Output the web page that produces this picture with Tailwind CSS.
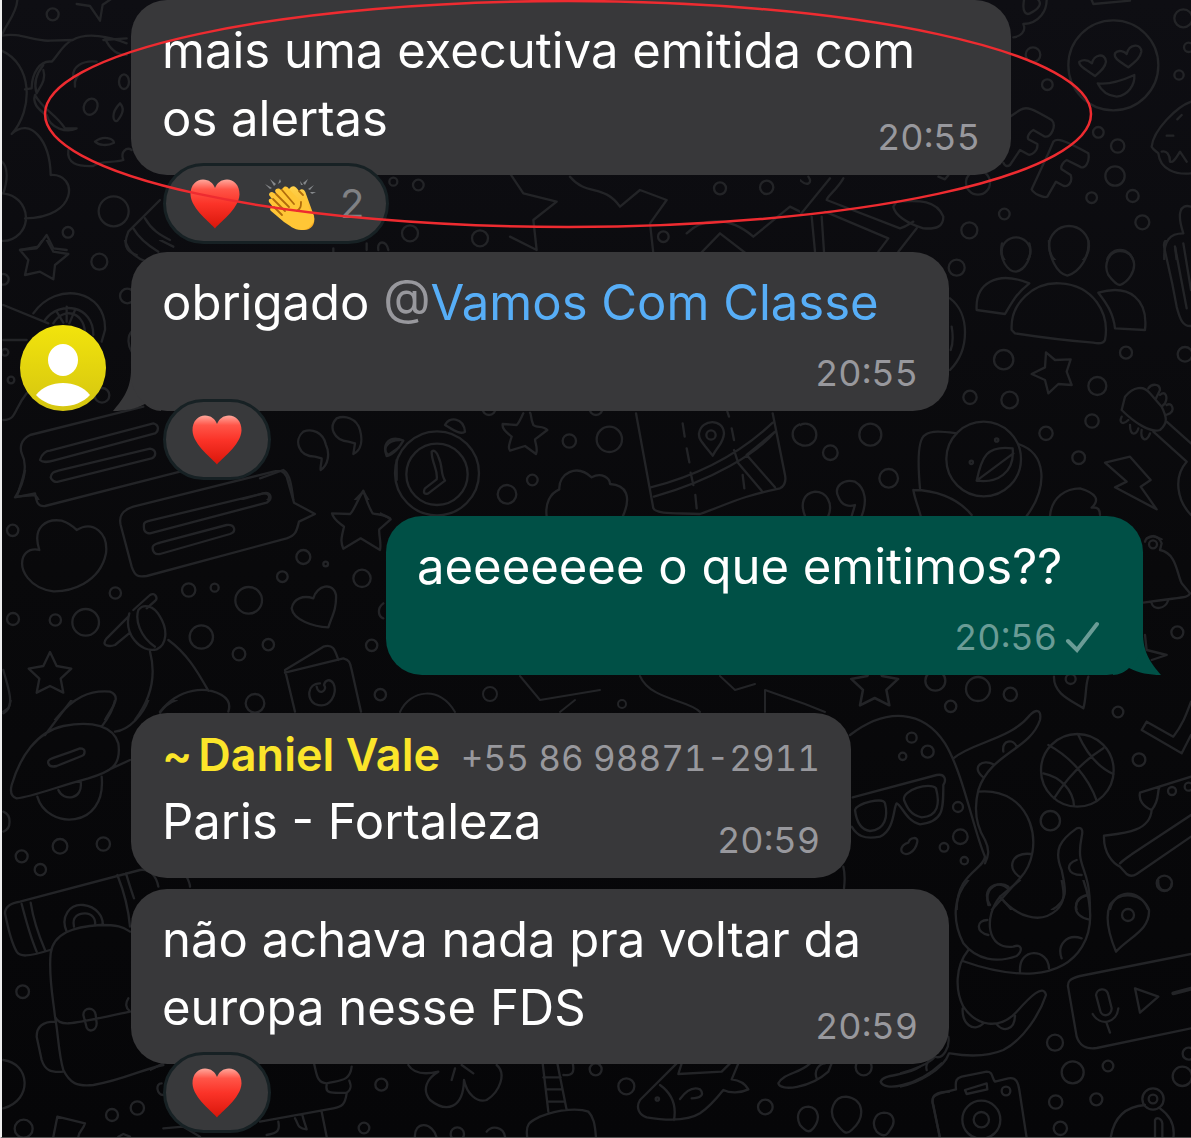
<!DOCTYPE html>
<html lang="pt-BR">
  <head>
    <meta charset="UTF-8" />
    <meta name="viewport" content="width=device-width, initial-scale=1.0" />
    <title>Vamos Com Classe</title>
    <script src="https://cdn.jsdelivr.net/npm/@tailwindcss/browser@4"></script>
  </head>
  <body class="bg-[#08080a] font-['Inter',sans-serif] text-white">
    <div class="relative isolate min-h-screen overflow-hidden border-b border-l-2 border-b-[#555] border-l-[#eee] bg-linear-to-b from-[#0e0e13] via-[#09090b] to-[#060608]">
      <!-- Wallpaper doodles -->
      <svg class="absolute -left-0.5 top-0 -z-10 h-full w-[calc(100%+2px)]" viewBox="0 0 1191 1138" preserveAspectRatio="xMinYMin slice" fill="none" stroke="#232427" stroke-linejoin="round" stroke-linecap="round" aria-hidden="true">
        <defs>
          <path id="star" d="M0-62 20-20 64-12 32 18 40 60 0 40-40 60-32 18-64-12-20-20Z" />
        </defs>

        <svg width="400" height="260" viewBox="0 0 1200 780" stroke-width="7">
          <circle cx="158" cy="43" r="18" /><circle cx="341" cy="634" r="45" /><circle cx="204" cy="697" r="16" /><circle cx="1180" cy="545" r="12" />
          <path d="M230 12 270 18 300 62 308 14 335-4M0 108C60 95 100 125 150 122L218 120C190 130 175 165 155 185 120 180 95 220 95 265L75 268M52 0C50 40 20 70 8 100M0 150C100 190 100 330 35 402 90 350 150 420 152 525 235 520 235 655 75 655M0 580C70 580 100 655 60 700 40 720 20 725 0 722M0 480C30 500 20 550 10 580" />
          <path d="M218 120C260 95 330 110 380 130M315 115C330 150 350 165 380 165M310 120 380 115M130 210C140 240 120 260 110 280 100 250 110 220 130 195M105 285C130 330 165 340 195 385H230C200 400 150 385 140 345 100 320 100 300 105 285M205 450C200 490 230 500 280 498 300 480 340 490 370 480 360 455 380 440 395 450M220 230C215 200 250 180 290 185M225 260C222 240 230 225 250 215M285 425C310 405 340 415 342 428 320 440 295 435 285 425ZM360 310C330 340 340 370 352 362 375 335 370 320 360 310Z" />
          <ellipse cx="272" cy="320" rx="20" ry="25" transform="rotate(25 272 320)" /><ellipse cx="372" cy="245" rx="15" ry="22" />
          <path d="M480 600 385 695C370 730 375 755 410 765M400 685C420 720 450 740 475 755M435 655C455 690 480 705 510 720M60 750 115 740 140 705 160 745 200 750" />
        </svg>

        <svg x="400" y="170" width="400" height="84" viewBox="0 0 1200 252" stroke-width="7">
          <circle cx="55" cy="45" r="16" /><circle cx="240" cy="205" r="24" /><circle cx="960" cy="55" r="18" /><circle cx="1100" cy="52" r="20" /><circle cx="790" cy="200" r="16" /><circle cx="30" cy="190" r="24" />
          <path d="M330 10 370 70 470 95 400 150 410 240 330 200M510 20C560 80 610 40 660 110L720 60 800 90 750 160 760 250M860 190C900 150 980 130 1060 200L1170 110 1200 125M900 252 960 190 1040 252" />
        </svg>

        <svg x="800" y="0" width="391" height="260" viewBox="0 0 1173 780" stroke-width="7">
          <circle cx="940" cy="196" r="135" /><circle cx="699" cy="164" r="22" /><circle cx="742" cy="254" r="16" /><circle cx="895" cy="397" r="16" /><circle cx="953" cy="438" r="20" /><circle cx="945" cy="528" r="29" /><circle cx="875" cy="593" r="16" /><circle cx="998" cy="588" r="18" /><circle cx="1027" cy="667" r="21" /><circle cx="613" cy="642" r="16" /><circle cx="508" cy="691" r="24" /><circle cx="1150" cy="55" r="27" /><circle cx="1137" cy="225" r="14" /><circle cx="1166" cy="142" r="14" /><circle cx="534" cy="548" r="36" /><path d="M415 530 435 538 445 526M0 540C20 560 40 550 25 530" />
          <path d="M885 228C850 205 835 195 838 185 855 175 870 185 876 190 880 165 915 155 918 185 915 205 900 215 885 228ZM985 202C960 185 940 175 945 160 955 147 975 155 980 162 988 130 1025 130 1024 155 1020 175 1005 185 985 202ZM893 250C930 255 970 240 1003 225 1005 255 985 285 950 290 925 288 905 275 893 250Z" />
          <path d="M630 350 660 330C680 318 695 325 755 360 770 375 755 412 735 410L700 390C690 395 680 408 685 418L712 432C715 450 695 470 682 462L660 450 630 495C620 502 612 495 610 488M745 460 760 425C770 415 785 415 865 460 870 485 855 510 840 500L800 480C790 485 780 500 785 508L812 525C820 550 800 562 790 557L768 545 742 590C730 595 700 580 695 568L745 460" />
          <path d="M1173 305C1130 320 1060 390 1055 440 1060 450 1070 455 1075 460 1080 510 1130 525 1173 520M1085 455C1100 450 1110 465 1110 485 1120 490 1130 470 1140 455L1160 485M1100 407H1120M1132 358 1145 345M672 0C665 40 680 45 690 40 720 25 725 10 715 0M740 0C740 30 720 70 670 72 680 95 660 110 640 112M875 0 880 12 990 2" />
          <circle cx="807" cy="738" r="60" /><circle cx="648" cy="755" r="43" /><circle cx="960" cy="790" r="40" />
          <path d="M130 535C110 570 80 590 80 600L300 685C320 680 330 670 340 665M290 605C360 600 410 600 430 650 430 680 410 688 370 685 320 670 285 645 280 620ZM90 535 0 645M35 650 45 755M65 650 72 755M75 635 265 715 235 755M350 685 295 755M1173 620C1140 610 1130 640 1150 700 1110 700 1090 720 1093 780M1125 740 1130 780" />
        </svg>

        <svg x="0" y="240" width="400" height="260" viewBox="0 0 1200 780" stroke-width="7">
          <path d="M135-10 160 35 205 42 165 75 160 118 120 95 75 105 85 60 60 30 110 25ZM375 0C385 40 420 60 440 65M480 0 520 20" />
          <circle cx="298" cy="65" r="24" /><circle cx="10" cy="118" r="16" /><circle cx="382" cy="168" r="22" /><circle cx="306" cy="466" r="22" /><circle cx="33" cy="420" r="10" /><circle cx="15" cy="337" r="10" /><path d="M395 275C380 290 385 320 395 335M10 195 145 250M100 220C170 120 320 150 315 270L305 305M135 240C180 180 280 195 280 285M160 250C190 200 250 215 255 275M200 200V245M225 210 208 250M170 215 190 248M10 300H80M10 540C50 540 40 510 80 460M1000 25V35M1100 10V30M1135 30C1130 0 1160 0 1165 30" />
          <path d="M430 500 90 585C60 600 60 625 65 640 85 680 70 710 50 770L105 765C115 775 115 780 120 790M780 715 850 690C870 700 875 740 880 780M120 660C125 640 140 632 150 632L460 550C480 555 475 575 465 580L160 662C140 668 125 665 120 660ZM152 712C155 695 165 695 175 692L450 626C472 630 468 650 455 655L175 725C165 728 155 722 152 712ZM500 840 790 760C810 758 812 775 800 782" />
          <path d="M978 615C970 575 935 565 910 575 880 600 895 650 945 650L965 655C965 670 960 680 962 690 985 675 990 640 978 615ZM1080 570C1070 535 1035 525 1010 535 985 560 1000 600 1045 605L1065 610 1060 642C1085 630 1088 600 1080 570ZM1200 600C1160 600 1145 630 1165 645L1200 620M1190 660V720M1065 780 1090 755 1105 780" />
        </svg>

        <svg x="380" y="400" width="420" height="120" viewBox="0 0 1260 360" stroke-width="7">
          <circle cx="171" cy="220" r="126" /><circle cx="171" cy="223" r="92" /><circle cx="568" cy="123" r="20" /><circle cx="688" cy="118" r="38" /><circle cx="457" cy="240" r="16" /><circle cx="381" cy="283" r="28" /><circle cx="327" cy="25" r="20" /><circle cx="648" cy="25" r="20" /><circle cx="1270" cy="103" r="32" />
          <path d="M155 155C160 148 170 155 175 170 190 200 180 220 195 242L145 280C130 285 130 275 135 265L170 238C175 210 155 190 155 155ZM195 75C205 50 250 50 255 95 240 105 220 90 195 75ZM20 168C5 130 30 105 70 122 60 140 40 165 20 168ZM0 340 30 355" />
          <path d="M430 40C420 60 415 72 410 75L368 72C365 90 385 100 395 110 385 140 385 145 390 152L435 138 468 162C475 145 465 130 465 118L502 90C490 75 470 85 460 75 450 50 455 45 450 38M500 350C495 310 510 280 538 268 535 220 590 190 635 232 665 215 690 235 690 252 740 255 755 290 728 350" />
          <path d="M768 40 820 325C830 345 900 338 960 342 1050 310 1080 290 1200 265 1218 255 1218 240 1215 225L1178 40M812 262C960 225 1080 160 1178 68M822 290C1000 240 1130 160 1185 95M1062 150 1075 190 1145 272M1100 165 1185 262M1100 165 1185 95M932 218 940 255M908 70 914 110M920 145 928 187M946 285 950 325M1042 35 1047 50M1055 85 1062 120M1088 225 1093 265M998 167C970 130 955 120 957 100 965 55 1030 55 1032 100 1030 130 1015 135 998 167Z" />
          <circle cx="993" cy="105" r="14" />
        </svg>

        <svg x="800" y="240" width="391" height="300" viewBox="0 0 1173 900" stroke-width="7">
          <circle cx="470" cy="83" r="24" /><circle cx="611" cy="359" r="29" /><circle cx="978" cy="338" r="18" /><circle cx="892" cy="438" r="27" /><circle cx="876" cy="543" r="20" /><circle cx="510" cy="472" r="20" /><circle cx="629" cy="480" r="25" /><circle cx="738" cy="580" r="20" /><circle cx="836" cy="653" r="19" /><circle cx="16" cy="584" r="33" /><circle cx="91" cy="638" r="22" /><circle cx="211" cy="584" r="33" /><circle cx="266" cy="715" r="28" /><circle cx="1155" cy="343" r="22" /><circle cx="551" cy="657" r="112" /><circle cx="590" cy="600" r="5" /><circle cx="514" cy="667" r="5" />
          <path d="M606 10C595 60 625 95 648 95 675 90 700 50 688 10M747 0C745 50 770 100 802 107 840 95 870 50 865 0M960 33C925 33 910 75 925 105 940 125 950 135 960 135 985 125 1005 95 1002 70 1000 50 985 33 960 33ZM530 210C525 130 590 90 688 130 650 160 640 180 615 222ZM635 270C630 190 700 125 780 130 880 135 930 220 915 300 910 312 890 310 880 308 780 300 710 290 645 280ZM895 158C990 130 1045 180 1035 270L945 265C940 220 920 190 895 158Z" />
          <path d="M738 337 765 360 812 358 800 395 815 435 775 432 745 460 735 420 695 402 735 382ZM450 175C510 220 510 330 450 390M455 260C460 290 460 310 452 330M360 745C355 690 350 600 375 585 395 570 430 575 470 580M655 612C740 640 745 740 680 828M340 750C400 750 470 770 515 825M340 750C345 780 355 800 362 828M530 722C545 650 560 615 638 625 645 700 590 730 530 722ZM530 722 640 640" />
          <path d="M750 828C755 770 800 745 840 745 890 760 900 780 875 803 895 800 900 810 900 825M915 668 990 650 1052 720 1022 740 1070 808 945 742 980 725Z" />
          <path d="M975 470C1000 440 1030 435 1050 460L1085 500C1100 530 1105 550 1080 570 1050 580 1000 545 965 510ZM1045 445C1055 430 1080 430 1080 450L1068 475M1080 465C1095 450 1105 470 1095 490L1085 500M1100 495C1115 485 1125 510 1110 520L1098 525M965 530C955 550 970 555 985 540M990 555C990 590 1010 585 1015 565M1025 570C1020 600 1040 610 1050 580M1060 575 1160 665M1100 545 1173 610M1160 665C1120 710 1130 780 1173 825M1100 0C1080 10 1100 30 1130 200 1140 240 1150 260 1173 258M1125 20 1160 205M1150 10 1173 150" />
          <path d="M85 828C100 790 80 755 45 755 10 760 0 790 15 828M115 770C100 740 130 715 165 725 200 745 200 790 185 828M115 770C125 800 150 800 165 795L155 828M1040 895 1060 888 1085 898" />
        </svg>

        <svg x="0" y="470" width="400" height="250" viewBox="0 0 1200 750" stroke-width="7">
          <circle cx="38" cy="181" r="17" /><circle cx="39" cy="447" r="18" /><circle cx="166" cy="450" r="17" /><circle cx="257" cy="457" r="40" /><circle cx="346" cy="369" r="17" /><circle cx="566" cy="360" r="20" /><circle cx="644" cy="353" r="12" /><circle cx="746" cy="391" r="40" /><circle cx="847" cy="320" r="16" /><circle cx="910" cy="261" r="21" /><circle cx="977" cy="282" r="7" /><circle cx="1086" cy="325" r="26" /><circle cx="604" cy="501" r="35" /><circle cx="717" cy="552" r="19" /><circle cx="805" cy="524" r="17" /><circle cx="1115" cy="526" r="17" /><circle cx="1141" cy="674" r="17" /><circle cx="765" cy="700" r="28" />
          <path d="M1090 62C1070 95 1060 125 1050 132L996 130C1000 150 1020 160 1032 170 1025 200 1020 215 1030 236L1082 205 1140 240C1145 220 1135 190 1138 178L1172 148C1155 130 1130 135 1118 130 1105 110 1100 90 1090 62Z" />
          <use href="#star" x="150" y="608" />
          <path d="M75 0C70 40 60 60 45 82L105 70C110 100 115 110 135 108L540 5M118 240C95 170 140 145 185 152 210 160 220 170 230 180 280 150 325 190 318 250 300 340 210 365 160 364 90 355 55 300 70 260 80 240 100 235 118 240ZM400 110C370 120 355 135 362 165L395 290C405 320 415 322 440 318L860 205C890 195 890 180 897 155L945 132 882 98 860 20C850 0 840 0 820 5L400 110M432 165C430 155 440 155 450 152L790 70C812 65 820 85 800 98L450 190C435 190 430 180 432 165ZM458 232C460 222 470 222 480 218L680 165C705 162 710 185 690 192L480 252C465 255 457 245 458 232Z" />
          <path d="M400 420 450 375C465 365 475 385 465 393L440 415M385 440 320 505C300 530 330 530 345 525L390 488M388 430C370 490 420 550 470 538 500 525 505 480 480 440 460 405 430 400 415 420 405 450 420 500 465 530M450 545C470 620 450 690 405 750M505 510C560 550 590 600 625 662M480 725C540 650 620 650 665 675 690 690 690 710 685 725M165 750C220 680 270 660 330 665 370 680 330 720 315 750M940 385C950 345 1000 335 1008 375 1010 420 995 440 985 472 940 470 880 450 875 415 880 385 910 375 940 385ZM885 725 855 600 970 530C1000 520 1005 540 1015 570M855 608 1030 565C1050 570 1050 580 1055 600L1083 725M960 640C920 640 920 690 945 702 990 720 1015 670 1000 640 990 625 975 630 972 645 985 660 955 680 950 650M1150 400C1130 415 1135 440 1150 445M10 600C20 640 40 690 25 715L10 725" />
        </svg>

        <svg x="900" y="500" width="291" height="180" viewBox="0 0 873 540" stroke-width="7">
          <circle cx="832" cy="397" r="18" /><circle cx="759" cy="133" r="12" /><path d="M735 125C740 105 775 100 785 130L780 150C830 160 830 220 845 250L870 280C865 295 850 290 730 308M755 310C760 330 795 330 805 300M735 405 740 450 800 465 755 480" />
        </svg>

        <!-- Strip between the green bubble and the next one -->
        <g stroke-width="2">
          <path d="M400 712C410 690 440 685 455 712M520 676 540 700 600 690M640 676C650 700 690 700 700 712M765 712V690L805 704 825 712M560 712 575 700M720 676 735 690 755 684" /><circle cx="490" cy="694" r="7" /><circle cx="622" cy="704" r="4" />
        </g>

        <svg x="830" y="670" width="361" height="240" viewBox="0 0 1083 720" stroke-width="7">
          <circle cx="316" cy="32" r="30" /><circle cx="444" cy="57" r="36" /><circle cx="541" cy="73" r="20" /><circle cx="362" cy="109" r="17" /><circle cx="245" cy="203" r="15" /><circle cx="293" cy="245" r="18" /><circle cx="218" cy="259" r="11" /><circle cx="864" cy="126" r="16" /><circle cx="927" cy="269" r="19" /><circle cx="742" cy="301" r="109" /><circle cx="661" cy="452" r="29" /><circle cx="384" cy="411" r="15" /><circle cx="391" cy="500" r="22" /><circle cx="342" cy="532" r="13" /><circle cx="403" cy="572" r="11" /><circle cx="1003" cy="640" r="23" /><circle cx="722" cy="27" r="15" /><circle cx="1026" cy="363" r="12" /><circle cx="1076" cy="350" r="12" />
          <use href="#star" transform="translate(134 40) scale(1.1)" />
          <path d="M60 195C170 110 280 120 345 220 400 310 430 480 465 560 460 600 380 610 380 720M370 265C430 215 540 210 600 135 620 115 635 120 630 150 600 240 480 250 445 360 430 420 440 470 465 510 480 540 475 560 465 580M445 365C610 350 650 540 570 625L485 720M510 680 545 720M520 245C515 210 550 205 560 230M460 322C420 290 460 265 490 283M602 552C540 545 530 600 572 622M480 705C450 660 500 620 538 660M665 720C720 690 705 650 695 600 670 540 690 510 740 475 755 470 760 480 755 500 735 600 780 580 780 720M740 570C705 580 710 615 755 615M775 675C740 680 735 700 740 720M840 720C850 660 930 650 955 720" />
          <path d="M68 382 320 315C345 310 350 330 340 345 340 420 340 455 270 463 230 455 215 405 200 400 190 410 195 480 150 500 100 510 80 495 65 470M75 420C80 400 160 380 165 400 175 440 165 480 120 483 95 480 80 460 75 420ZM222 390C215 360 300 335 318 355 330 400 325 440 275 442 240 435 230 410 222 390ZM215 545C210 530 225 520 235 518 240 500 265 500 262 515 255 550 225 560 215 545Z" />
          <path d="M655 225C720 260 775 320 800 392M672 385C720 310 780 260 820 235M745 195C770 250 800 290 850 312M640 310C690 320 730 360 732 408M672 20C670 70 720 90 760 115 770 80 765 50 775 20M950 155 1030 200C1060 160 1070 130 1083 95M950 155 935 180 1055 250 1083 195M1083 320 930 368C925 390 940 410 965 420 990 390 980 370 988 352M965 420C960 485 880 490 822 497 820 550 850 580 870 590L890 612C900 620 910 618 920 612L1083 500M870 580C880 570 895 560 905 553L1083 435M40 590C45 610 45 630 42 655" />
        </svg>

        <svg x="0" y="700" width="200" height="438" viewBox="0 0 600 1314" stroke-width="7">
          <circle cx="65" cy="469" r="18" /><circle cx="121" cy="509" r="17" /><circle cx="180" cy="439" r="22" /><circle cx="310" cy="432" r="20" /><circle cx="68" cy="875" r="19" /><circle cx="71" cy="1286" r="27" /><circle cx="336" cy="1245" r="18" /><circle cx="412" cy="1224" r="20" /><path d="M222 680C215 650 235 640 255 640 275 640 288 655 285 675" />
          <path d="M35 255C60 170 110 95 190 78 280 60 340 80 355 130 365 200 330 215 265 235 170 260 100 290 50 295 35 290 30 275 35 255ZM145 190C140 175 155 178 240 145 260 145 255 165 245 168L170 198C155 202 148 200 145 190ZM112 290C140 390 320 390 305 230M175 270C190 305 250 300 242 245M135 105 215 0M345 0C340 30 320 60 305 80M445 0C430 40 390 90 345 95M530 0C500 10 490 25 480 38M325 210 390 180M10 335C35 345 35 385 10 395M10 40C30 30 30 10 32 0" />
          <path d="M15 640C15 620 30 610 60 605L420 510C450 505 470 530 475 560M15 640C25 690 35 730 50 755 60 770 80 772 150 750M65 612C80 670 95 720 110 755M92 608C100 660 120 715 135 750M352 525C370 570 385 620 390 680M378 520C390 560 395 575 402 595M200 695C180 650 210 610 250 615 290 620 310 650 308 675M152 760C160 700 220 680 300 675 350 675 370 680 390 695M152 760C145 830 160 900 165 950 180 985 220 970 390 935M165 950C175 1000 175 1060 190 1110 210 1150 230 1160 280 1155 370 1140 420 1110 490 1095M165 965C130 965 110 980 110 1010L125 1080C135 1110 150 1118 190 1115M250 945C250 920 285 920 287 945L290 970C290 995 260 1000 258 975ZM385 895C375 910 378 925 388 932M10 1080C90 1090 100 1200 10 1225M160 1310 172 1250 255 1270C250 1290 235 1295 235 1310M355 1310 370 1302 390 1310M485 1150C465 1150 470 1185 490 1185M570 560C570 550 565 540 560 530" />
        </svg>

        <svg x="900" y="880" width="291" height="258" viewBox="0 0 873 774" stroke-width="7">
          <circle cx="684" cy="105" r="18" /><circle cx="465" cy="488" r="24" /><circle cx="518" cy="577" r="33" /><circle cx="624" cy="558" r="16" /><circle cx="467" cy="666" r="20" /><circle cx="589" cy="658" r="18" /><circle cx="481" cy="745" r="20" /><circle cx="847" cy="589" r="29" /><circle cx="866" cy="521" r="18" /><circle cx="244" cy="719" r="57" /><circle cx="244" cy="719" r="23" /><circle cx="318" cy="633" r="13" /><circle cx="759" cy="657" r="32" /><circle cx="759" cy="657" r="13" />
          <path d="M648 215C625 160 615 110 630 75 660 30 730 40 747 90 750 150 690 170 648 215ZM205 0C160 50 155 120 190 190 230 240 290 250 350 228 370 210 365 190 340 200 260 210 250 110 300 50L360 0M550 0C610 170 530 270 400 280 320 285 250 265 188 243M300 50C350 110 420 135 470 90 500 60 490 30 485 0M265 75C250 20 300 0 325 20M262 120C230 120 225 155 265 165M562 45C515 60 515 105 565 118M545 175C500 160 470 195 485 235M360 275C355 200 445 205 447 265M205 210C165 260 165 330 190 380 230 440 300 450 350 395 390 350 430 310 438 345 420 400 370 480 310 510 250 535 190 527 150 520M188 385C185 430 220 460 250 430M345 405C345 455 305 455 290 432" />
          <path d="M873 222 540 288C510 295 500 305 505 325L530 470C540 500 560 508 590 504L873 445M588 345C590 325 620 320 625 345L635 385C635 408 605 415 600 390ZM578 402C600 440 650 430 655 385M620 430 630 458M705 325 775 350 720 398ZM775 0C770 40 815 40 815 10M632 774C640 720 670 680 735 675M780 685C815 710 825 740 820 774M765 774V720C770 710 785 715 787 730V774" />
          <path d="M820 340 873 326" stroke-width="12" />
          <path d="M120 774 98 670C95 650 105 645 120 640L168 628C165 600 170 595 185 590L260 575C280 575 275 595 285 605L325 595C350 590 355 610 358 630L380 774M195 630 260 610 262 628 200 642ZM0 580C40 570 90 550 105 530 130 540 150 500 145 470M0 620C50 610 130 570 147 520M80 570C75 550 90 535 105 530" />
        </svg>

        <svg x="150" y="1030" width="400" height="108" viewBox="0 0 1200 324" stroke-width="7">
          <circle cx="694" cy="164" r="18" /><circle cx="642" cy="294" r="16" /><circle cx="922" cy="312" r="20" />
          <path d="M492 100C500 130 500 160 530 160 570 150 600 155 605 110M530 165C525 190 540 190 590 188 610 175 600 160 598 152M590 190C585 225 575 230 550 235L330 275M515 245 530 320M385 275C390 300 385 310 350 315M435 265C445 280 440 295 470 298 465 280 460 270 458 258M775 105C790 130 820 135 865 125 830 145 815 180 840 210 890 250 940 235 942 150 950 190 980 220 1010 210 1050 185 1070 130 1040 105M905 150 915 115M970 130 935 105M795 324C790 270 850 275 860 324M1010 305C1025 285 1060 290 1065 320M40 295 100 290 150 320M0 120 40 100" />
        </svg>

        <svg x="500" y="1030" width="450" height="108" viewBox="0 0 1350 324" stroke-width="7">
          <circle cx="287" cy="118" r="18" /><circle cx="379" cy="169" r="24" /><circle cx="796" cy="231" r="22" /><circle cx="1091" cy="112" r="24" /><circle cx="472" cy="207" r="5" />
          <path d="M128 100 145 245M172 100 200 240M130 142H182M138 178H185M145 215H192M218 100C225 130 215 137 190 135M82 324C75 280 90 275 120 260 180 235 240 235 265 245 280 260 285 280 288 324M530 100 420 210C405 235 420 255 440 262 500 272 560 275 600 250 630 230 650 205 670 180 690 190 720 190 745 178 735 160 715 150 695 148L715 100M545 100 535 132 665 125 690 100M480 165C515 190 530 225 522 270M540 207C560 180 580 170 600 178 615 195 600 205 575 205M930 100C900 130 850 130 835 160 840 185 930 175 985 125L995 100M950 145C940 120 960 100 975 100M1260 110C1220 140 1150 130 1142 155 1150 185 1250 170 1325 100M925 230C900 230 885 255 900 285 920 308 930 308 940 295 960 270 960 235 925 230ZM1038 200C1000 200 985 245 1005 275 1030 310 1040 315 1055 300 1100 260 1090 205 1038 200ZM1152 248C1120 250 1115 285 1130 305 1150 322 1160 318 1170 300 1190 275 1180 248 1152 248ZM1350 185C1310 185 1290 195 1300 225L1320 324" />
        </svg>
      </svg>

      <!-- Emoji shared by the reactions -->
      <svg class="absolute size-0" aria-hidden="true">
        <defs>
          <linearGradient id="heartFill" x1="0" y1="0" x2="0" y2="1">
            <stop offset="0" stop-color="#ffa89c" />
            <stop offset=".2" stop-color="#ff5548" />
            <stop offset=".5" stop-color="#fb3328" />
            <stop offset="1" stop-color="#d9160a" />
          </linearGradient>
          <linearGradient id="handFill" x1="0" y1="0" x2="0" y2="1">
            <stop offset="0" stop-color="#ffd24a" />
            <stop offset="1" stop-color="#f7a81c" />
          </linearGradient>
          <symbol id="heart" viewBox="0 0 50 50">
            <path d="M25 49.500C22 45 1 30 .5 15.500.2 6 6.500.5 13 .5 19 .5 23 4 25 9 27 4 31 .5 37 .5 43.500.5 49.800 6 49.500 15.500 49 30 28 45 25 49.500Z" fill="url(#heartFill)" />
          </symbol>
          <symbol id="clap" viewBox="0 0 52 54">
            <g fill="#85888b">
              <path d="M1 7 8 11 6 12ZM6 2 12 7 10 9ZM16 2 17 5 14 7ZM44 2 41 8 39 6ZM36 4 37 8 39 8ZM50 8 44 12 46 13ZM52 15 46 15 48 17Z" />
            </g>
            <path d="M27 10C30 8 32 10 35 14 37 11 41 12 42 17L50 39C52 48 46 54 39 53 27 49 20 42 9 32L24 13Z" fill="url(#handFill)" />
            <path d="M20 10C22 9 24 10 25 12L37 25C38 23 37 20 40 19 44 20 43 25 45 31 48 36 51 38 50 44 46 51 43 53 37 53 30 53 25 48 20 45L7 34C5 32 7 30 9 30L5 25C4 22 6 21 8 22L5 18C5 15 8 14 10 16L13 18 11 14C12 11 15 11 17 13Z" fill="#ffc636" />
            <path d="M9 22 21 34M10 30 18 38M12 17 25 30M18 13 30 27M37 25C37 29 37 31 33 34M35 14 39 18" fill="none" stroke="#b06c0c" stroke-width="1.800" stroke-linecap="round" />
          </symbol>
        </defs>
      </svg>

      <main class="flex flex-col items-start pl-[129px] pr-12 text-[49px] leading-[68px]">
        <article class="w-[880px] max-w-full rounded-[36px] bg-[#38383a] px-[31px] pb-4 pt-[17px]">
          <p class="flow-root">
            mais uma executiva emitida com os alertas
            <time class="float-right mt-[30px] text-[36px] leading-[44px] tabular-nums text-[#98989d]">20:55</time>
          </p>
        </article>
        <div class="z-10 -mt-3 mb-2 ml-8 flex h-[81px] items-center gap-6 rounded-full border-3 border-[#172124] bg-[#38393b] pl-6 pr-[22px]">
          <svg class="size-[50px]" role="img" aria-label="Coração"><use href="#heart" /></svg>
          <svg class="h-[54px] w-[52px]" role="img" aria-label="Palmas"><use href="#clap" /></svg>
          <span class="w-6 text-[40px] text-[#808184]">2</span>
        </div>

        <div class="relative w-[818px] max-w-full">
          <svg class="absolute -left-[111px] bottom-0 size-[86px]" viewBox="0 0 86 86" role="img" aria-label="Foto do perfil">
            <defs>
              <linearGradient id="avatarFill" x1="0" y1="0" x2="0" y2="1">
                <stop offset="0" stop-color="#f2e40c" />
                <stop offset="1" stop-color="#d5c510" />
              </linearGradient>
            </defs>
            <circle cx="43" cy="43" r="43" fill="url(#avatarFill)" />
            <ellipse cx="43" cy="35" rx="15" ry="16" fill="#fff" />
            <path d="M16 70C28 54 58 54 70 70 56 85 30 85 16 70Z" fill="#fff" />
          </svg>
          <svg class="absolute -left-[18px] bottom-0 h-[52px] w-12 fill-[#38383a]" viewBox="0 0 48 52" aria-hidden="true">
            <path d="M18 0V10C18 30 10 40 0 52 12 52 22 50 32 45 36 49 42 52 48 52V0Z" />
          </svg>
          <article class="relative rounded-[36px] bg-[#38383a] px-[31px] pb-4 pt-[17px]">
            <p>obrigado <a href="#" class="text-[#57aef7]"><span class="text-[#98989d]">@</span>Vamos Com Classe</a></p>
            <time class="mt-3.5 block text-right text-[36px] leading-[44px] tabular-nums text-[#98989d]">20:55</time>
          </article>
        </div>
        <div class="z-10 -mt-3 mb-9 ml-8 flex h-[81px] items-center rounded-full border-3 border-[#172124] bg-[#38393b] px-[26px]">
          <svg class="size-[50px]" role="img" aria-label="Coração"><use href="#heart" /></svg>
        </div>

        <div class="relative mb-[38px] w-[757px] max-w-full self-end">
          <svg class="absolute -right-[18px] bottom-0 h-[52px] w-12 fill-[#005046]" viewBox="0 0 48 52" aria-hidden="true">
            <path d="M30 0V10C30 30 38 40 48 52 36 52 26 50 16 45 12 49 6 52 0 52V0Z" />
          </svg>
          <article class="relative rounded-[36px] bg-[#005046] pb-4 pl-[31px] pr-11 pt-[17px]">
            <p>aeeeeeee o que emitimos??</p>
            <div class="mt-3.5 flex items-center justify-end gap-2 text-[36px] leading-[44px] tabular-nums text-[#6a9c96]">
              <time>20:56</time>
              <svg class="h-8 w-[34px]" viewBox="0 0 34 32" fill="none" stroke="currentColor" stroke-width="4" stroke-linecap="round" role="img" aria-label="Enviada"><path d="M3 20 12 29 32 3" /></svg>
            </div>
          </article>
        </div>

        <article class="mb-[11px] w-[720px] max-w-full rounded-[36px] bg-[#38383a] px-[31px] pb-4 pt-3">
          <header class="flex items-baseline justify-between whitespace-nowrap leading-[60px]">
            <a href="#" class="flex gap-1.5 text-[45px] font-semibold text-[#fbe52a]"><span>~</span><span>Daniel Vale</span></a>
            <span class="text-[35px] tabular-nums text-[#98989d]">+55 86 98871-2911</span>
          </header>
          <p class="flow-root">
            Paris - Fortaleza
            <time class="float-right mt-[30px] text-[36px] leading-[44px] tabular-nums text-[#98989d]">20:59</time>
          </p>
        </article>

        <article class="w-[818px] max-w-full rounded-[36px] bg-[#38383a] px-[31px] pb-4 pt-[17px]">
          <p class="flow-root">
            não achava nada pra voltar da europa nesse FDS
            <time class="float-right mt-[30px] text-[36px] leading-[44px] tabular-nums text-[#98989d]">20:59</time>
          </p>
        </article>
        <div class="z-10 -mt-3 ml-8 flex h-[81px] items-center rounded-full border-3 border-[#172124] bg-[#38393b] px-[26px]">
          <svg class="size-[50px]" role="img" aria-label="Coração"><use href="#heart" /></svg>
        </div>
      </main>

      <!-- Red marker around the first message -->
      <svg class="pointer-events-none absolute left-[41px] top-0 z-20 h-[230px] w-[1050px]" viewBox="0 0 1050 230" fill="none" aria-hidden="true">
        <ellipse cx="525" cy="114" rx="523" ry="113" stroke="#ee2b30" stroke-width="2.500" />
      </svg>
    </div>
  </body>
</html>
